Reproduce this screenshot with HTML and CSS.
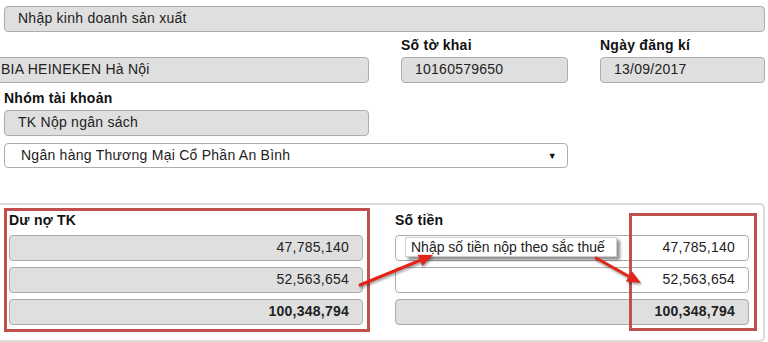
FILE: index.html
```html
<!DOCTYPE html>
<html lang="vi">
<head>
  <meta charset="UTF-8" />
  <title>Nộp thuế</title>
  <link rel="stylesheet" href="styles.css">
</head>
<body>
  <div class="page">
    <div class="field">Nhập kinh doanh sản xuất</div>

    <div class="grid">
      <div class="cell">
        <div class="label">&nbsp;</div>
        <div class="field bleed">BIA HEINEKEN Hà Nội</div>
      </div>
      <div class="cell">
        <div class="label">Số tờ khai</div>
        <div class="field">10160579650</div>
      </div>
      <div class="cell">
        <div class="label">Ngày đăng kí</div>
        <div class="field">13/09/2017</div>
      </div>
      <div class="cell">
        <div class="label">Nhóm tài khoản</div>
        <div class="field">TK Nộp ngân sách</div>
      </div>
      <div class="select">
        <span>Ngân hàng Thương Mại Cổ Phần An Bình</span>
        <span class="caret">▼</span>
      </div>
    </div>

    <div class="panel">
      <div class="col">
        <div class="label">Dư nợ TK</div>
        <div class="field num">47,785,140</div>
        <div class="field num">52,563,654</div>
        <div class="field num total">100,348,794</div>
      </div>
      <div class="col">
        <div class="label">Số tiền</div>
        <div class="field num input">47,785,140</div>
        <div class="field num input">52,563,654</div>
        <div class="field num total">100,348,794</div>
      </div>

      <!-- annotations drawn on top of the screenshot -->
      <div class="mark mark-left"></div>
      <div class="mark mark-right"></div>
      <div class="tip">Nhập số tiền nộp theo sắc thuế</div>
      <svg class="arrows" width="768" height="140" viewBox="0 0 768 140">
        <line x1="360" y1="82" x2="421" y2="57" stroke="#e3241b" stroke-width="3" stroke-linecap="round" />
        <polygon points="433,52 422.3,62.9 417.7,51.8" fill="#e3241b" />
        <line x1="596" y1="55" x2="630" y2="74" stroke="#e3241b" stroke-width="3" stroke-linecap="round" />
        <polygon points="641,80 625.9,78.4 631.7,68" fill="#e3241b" />
      </svg>
    </div>
  </div>
</body>
</html>
```

FILE: styles.css
```css
body {
  margin: 0;
  font-family: 'Liberation Sans', Arial, sans-serif;
  font-size: 14px;
  letter-spacing: 0.25px;
  color: #222;
  background: #fff;
  overflow: hidden;
}
.page {
  padding: 6px 3px 0 4px;
}
.field {
  box-sizing: border-box;
  height: 26px;
  padding: 3px 13px 0;
  line-height: 16px;
  background: #dfdfdf;
  border: 1px solid #adadad;
  border-radius: 4px;
  white-space: nowrap;
}
.label {
  font-weight: bold;
  line-height: 16px;
  margin-bottom: 4px;
  color: #111;
}
.grid {
  display: grid;
  grid-template-columns: 365px 167px 165px;
  column-gap: 32px;
  row-gap: 7px;
  margin-top: 5px;
}
.bleed {
  margin-left: -24px;
  padding-left: 20px;
}
.select {
  grid-column: 1 / 3;
  box-sizing: border-box;
  height: 25px;
  padding: 3px 10px 0 16px;
  line-height: 16px;
  border: 1px solid #adadad;
  border-radius: 4px;
  background: #fff;
  display: flex;
  justify-content: space-between;
}
.caret {
  font-size: 9px;
  line-height: 18px;
  color: #111;
}
.panel {
  position: relative;
  margin: 35px 0 0 -4px;
  height: 128px;
  border: 2px solid #dcdcdc;
  border-left: none;
  border-radius: 0 5px 5px 0;
  padding: 7px 13px 0 9px;
  display: flex;
  gap: 32px;
}
.col {
  width: 354px;
}
.col .label {
  margin-bottom: 7px;
}
.col .field {
  margin-bottom: 6px;
  text-align: right;
}
.field.input {
  background: #fff;
}
.field.total {
  font-weight: bold;
}
.mark {
  position: absolute;
  border: 3px solid #c0504d;
  box-sizing: border-box;
}
.mark-left {
  left: 4px;
  top: 3px;
  width: 366px;
  height: 124px;
}
.mark-right {
  left: 629px;
  top: 8px;
  width: 128px;
  height: 118px;
}
.tip {
  position: absolute;
  left: 405px;
  top: 32px;
  width: 200px;
  padding: 1px 5px 0;
  height: 17px;
  line-height: 16px;
  background: #fff;
  border: 1px solid #d0d0d0;
  box-shadow: 3px 3px 3px rgba(0, 0, 0, 0.45);
  white-space: nowrap;
  letter-spacing: 0;
}
.arrows {
  position: absolute;
  left: 0;
  top: -2px;
  filter: drop-shadow(1px 2px 1px rgba(0, 0, 0, 0.35));
}
```
